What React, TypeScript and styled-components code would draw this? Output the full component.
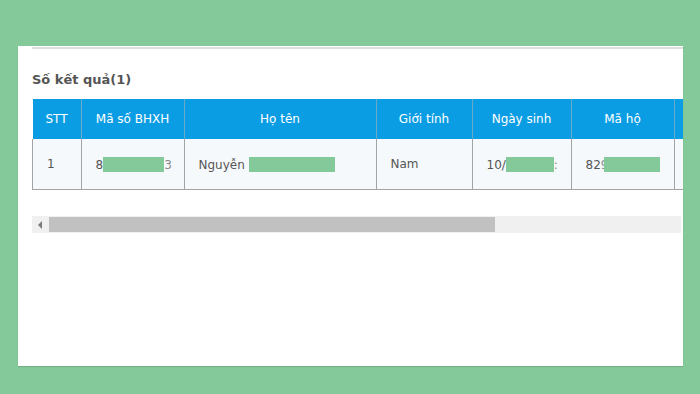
import React from 'react';
import styled, { createGlobalStyle } from 'styled-components';

const GlobalStyle = createGlobalStyle`
  html, body {
    margin: 0;
    padding: 0;
    background: #84c99a;
  }
  body {
    font-family: 'DejaVu Sans', Tahoma, Verdana, sans-serif;
  }
`;

const Page = styled.div`
  width: 700px;
  height: 394px;
  box-sizing: border-box;
  padding: 46px 17px 28px 18px;
  background: #84c99a;
`;

const Panel = styled.div`
  height: 100%;
  background: #ffffff;
  box-shadow: 0 1px 1px rgba(0, 0, 0, 0.12);
  overflow: hidden;
  padding-left: 14px;
  box-sizing: border-box;
`;

const TopRule = styled.div`
  height: 2px;
  margin-top: 1px;
  background: #dedede;
`;

const Title = styled.h3`
  margin: 23px 0 0;
  height: 27px;
  font-size: 13px;
  font-weight: bold;
  color: #555555;
  line-height: 16px;
`;

const TableClip = styled.div`
  overflow: hidden;
`;

const Table = styled.table`
  border-collapse: collapse;
  table-layout: fixed;
  width: 720px;
  font-size: 12px;
`;

const HeadCell = styled.th<{ w: number }>`
  width: ${({ w }) => w}px;
  height: 40px;
  padding: 0;
  background: #0b9de3;
  color: #ffffff;
  font-weight: normal;
  text-align: center;
  border-left: 1px solid #6aa9c9;
  &:first-child {
    border-left: none;
  }
`;

const BodyRow = styled.tr`
  background: #f6f9fc;
  border-bottom: 1px solid #9c9c9c;
`;

const Cell = styled.td`
  height: 50px;
  padding: 0 0 0 14px;
  color: #555555;
  white-space: nowrap;
  border: 1px solid #a4a4a4;
  border-top: none;
`;

/* green blocks hiding personal data */
const Mask = styled.span<{ w: number; lead?: number }>`
  display: inline-block;
  width: ${({ w }) => w}px;
  height: 15px;
  margin-left: ${({ lead }) => lead ?? 0}px;
  background: #84c99a;
  vertical-align: -3px;
`;

const Faint = styled.span`
  color: #8a8a8a;
`;

const Scrollbar = styled.div`
  display: flex;
  height: 17px;
  margin-top: 26px;
  margin-right: 2px;
  background: #f0f0f0;
`;

const ArrowButton = styled.div`
  width: 17px;
  display: flex;
  align-items: center;
  justify-content: center;
  color: #7a7a7a;
`;

const Thumb = styled.div<{ w: number }>`
  width: ${({ w }) => w}px;
  margin: 1px 0;
  background: #c1c1c1;
`;

const columns = [
  { label: 'STT', w: 48 },
  { label: 'Mã số BHXH', w: 102 },
  { label: 'Họ tên', w: 191 },
  { label: 'Giới tính', w: 95 },
  { label: 'Ngày sinh', w: 98 },
  { label: 'Mã hộ', w: 102 },
  { label: '', w: 80 },
];

export default function App() {
  return (
    <>
      <GlobalStyle />
      <Page>
        <Panel>
          <TopRule />
          <Title>Số kết quả(1)</Title>
          <TableClip>
            <Table>
              <thead>
                <tr>
                  {columns.map((c, i) => (
                    <HeadCell key={i} w={c.w}>
                      {c.label}
                    </HeadCell>
                  ))}
                </tr>
              </thead>
              <tbody>
                <BodyRow>
                  <Cell>1</Cell>
                  <Cell>
                    8<Mask w={61} />
                    <Faint>3</Faint>
                  </Cell>
                  <Cell>
                    Nguyễn <Mask w={86} />
                  </Cell>
                  <Cell>Nam</Cell>
                  <Cell>
                    10/<Mask w={48} />
                    <Faint>:</Faint>
                  </Cell>
                  <Cell>
                    82<Faint>9</Faint>
                    <Mask w={56} lead={-4} />
                  </Cell>
                  <Cell />
                </BodyRow>
              </tbody>
            </Table>
          </TableClip>
          <Scrollbar>
            <ArrowButton>
              <svg width="5" height="8" viewBox="0 0 5 8">
                <path d="M4 0 L0 4 L4 8 Z" fill="currentColor" />
              </svg>
            </ArrowButton>
            <Thumb w={446} />
          </Scrollbar>
        </Panel>
      </Page>
    </>
  );
}
